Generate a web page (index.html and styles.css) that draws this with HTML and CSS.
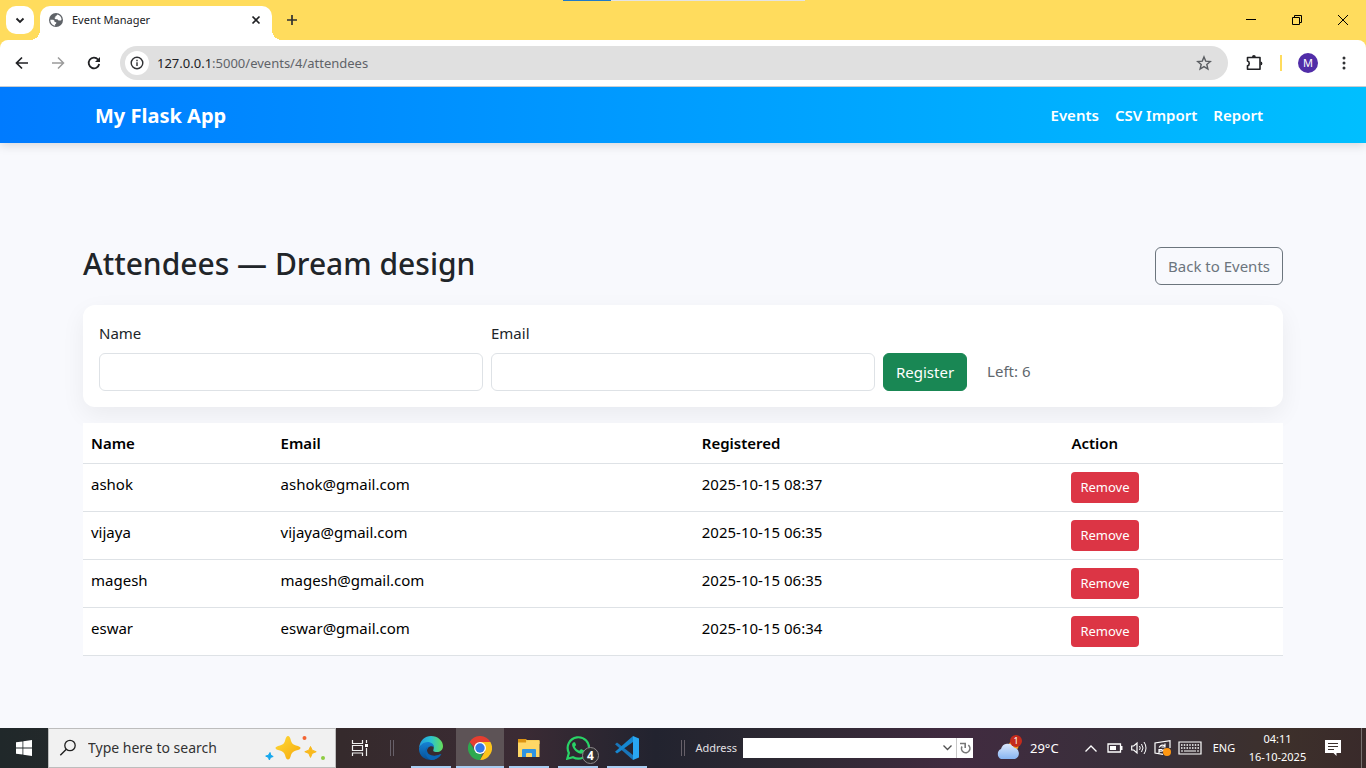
FILE: index.html
```html
<!DOCTYPE html>
<html lang="en">
<head>
<meta charset="utf-8">
<title>Event Manager</title>
<link rel="stylesheet" href="styles.css">
</head>
<body>
<header class="browser">
  <div class="load-bar"></div>
  <div class="tabstrip">
    <button class="tab-search" aria-label="Search tabs"><svg width="12" height="12" viewBox="0 0 12 12"><path d="M2.500 4.500 6 8l3.500-3.500" fill="none" stroke="#202124" stroke-width="1.800"/></svg></button>
    <div class="tab">
      <svg width="14" height="14" viewBox="0 0 14 14"><circle cx="7" cy="7" r="7" fill="#5f6368"/><path d="M1.300 6.800h2.900l1.300 1v1.300l1.700.2c.3 1-.2 1.800-1.100 2v1.400C3.300 12.300 1.300 9.800 1.300 6.800zM8.300 1.500c-.2 1-1 1.500-1.800 1.400v1.300l-1 .6c.2 1.400 1.200 1.600 3 1.500.4 1.500 2.600 1.500 4 .7C12.800 4.300 11 2.100 8.300 1.500z" fill="#fff"/></svg>
      <span class="tab-title">Event Manager</span>
      <button class="tab-close" aria-label="Close tab"><svg width="10" height="10" viewBox="0 0 10 10"><path d="m1.500 1.500 7 7m0-7-7 7" stroke="#202124" stroke-width="1.700"/></svg></button>
    </div>
    <button class="tab-new" aria-label="New tab"><svg width="12" height="12" viewBox="0 0 12 12"><path d="M6 1v10M1 6h10" stroke="#303030" stroke-width="1.700"/></svg></button>
    <div class="window-controls">
      <button aria-label="Minimize"><svg width="10" height="10" viewBox="0 0 10 10"><path d="M0 4.500h10" stroke="#000"/></svg></button>
      <button aria-label="Restore"><svg width="10" height="10" viewBox="0 0 10 10"><path d="M.5 2.500h7v7h-7zM2.500 2.500v-2h7v7h-2" fill="none" stroke="#000"/></svg></button>
      <button aria-label="Close"><svg width="10" height="10" viewBox="0 0 10 10"><path d="m0 0 10 10M10 0 0 10" stroke="#000"/></svg></button>
    </div>
  </div>
  <div class="toolbar">
    <button class="tool" aria-label="Back"><svg width="14" height="14" viewBox="0 0 14 14"><path d="M13 7H2M7 1.500 1.500 7 7 12.500" fill="none" stroke="#202124" stroke-width="1.700"/></svg></button>
    <button class="tool" aria-label="Forward"><svg width="14" height="14" viewBox="0 0 14 14"><path d="M1 7h11M7 1.500 12.500 7 7 12.500" fill="none" stroke="#9b9b9b" stroke-width="1.500"/></svg></button>
    <button class="tool" aria-label="Reload"><svg width="14" height="14" viewBox="0 0 14 14"><path d="M12.200 8A5.300 5.300 0 1 1 11 3.500l1 1.300" fill="none" stroke="#202124" stroke-width="1.800"/><path d="M13 1v5H8z" fill="#202124"/></svg></button>
    <div class="omnibox">
      <button class="site-info" aria-label="Site information"><svg width="14" height="14" viewBox="0 0 14 14"><circle cx="7" cy="7" r="5.800" fill="none" stroke="#303134" stroke-width="1.400"/><path d="M7 6.200V10M7 3.800v1.400" stroke="#303134" stroke-width="1.400"/></svg></button>
      <div class="url" role="textbox" aria-label="Address"><span class="host">127.0.0.1</span>:5000/events/4/attendees</div>
      <button class="star" aria-label="Bookmark"><svg width="16" height="16" viewBox="0 0 16 16"><path d="m8 1.900 1.700 4.200 4.600.4-3.500 3 1.100 4.500L8 11.600 4.100 14l1.100-4.500-3.500-3 4.600-.4z" fill="none" stroke="#5a5d61" stroke-width="1.400"/></svg></button>
    </div>
    <button class="tool extensions" aria-label="Extensions"><svg width="18" height="18" viewBox="0 0 18 18"><path d="M2.500 3.500H15v11.800H2.500v-3.500c2.300-.5 2.300-4.300 0-4.800z" fill="none" stroke="#202124" stroke-width="1.600" stroke-linejoin="round"/><path d="M7 3a1.900 1.900 0 0 1 3.800 0zM15.500 7.500a1.900 1.900 0 0 1 0 3.800z" fill="#202124"/></svg></button>
    <span class="tool-divider"></span>
    <button class="avatar" aria-label="Profile">M</button>
    <button class="tool more" aria-label="Menu"><svg width="4" height="14" viewBox="0 0 4 14"><g fill="#303134"><circle cx="2" cy="2" r="1.500"/><circle cx="2" cy="7" r="1.500"/><circle cx="2" cy="12" r="1.500"/></g></svg></button>
  </div>
</header>

<div class="page">
  <nav class="navbar">
    <div class="container navbar-inner">
      <a class="brand" href="#">My Flask App</a>
      <div class="nav-links"><a href="#">Events</a><a href="#">CSV Import</a><a href="#">Report</a></div>
    </div>
  </nav>
  <main class="container content">
    <div class="heading-row">
      <h2>Attendees — Dream design</h2>
      <a class="btn btn-outline" href="#">Back to Events</a>
    </div>
    <form class="card">
      <div class="field"><label for="name">Name</label><input id="name" type="text"></div>
      <div class="field"><label for="email">Email</label><input id="email" type="email"></div>
      <button class="btn btn-success" type="button">Register</button>
      <span class="left-count">Left: 6</span>
    </form>
    <table class="attendees">
      <thead><tr><th class="col-name">Name</th><th class="col-email">Email</th><th class="col-date">Registered</th><th>Action</th></tr></thead>
      <tbody>
        <tr><td>ashok</td><td>ashok@gmail.com</td><td>2025-10-15 08:37</td><td><button class="btn-remove">Remove</button></td></tr>
        <tr><td>vijaya</td><td>vijaya@gmail.com</td><td>2025-10-15 06:35</td><td><button class="btn-remove">Remove</button></td></tr>
        <tr><td>magesh</td><td>magesh@gmail.com</td><td>2025-10-15 06:35</td><td><button class="btn-remove">Remove</button></td></tr>
        <tr><td>eswar</td><td>eswar@gmail.com</td><td>2025-10-15 06:34</td><td><button class="btn-remove">Remove</button></td></tr>
      </tbody>
    </table>
  </main>
</div>

<footer class="taskbar">
  <button class="start" aria-label="Start"><svg width="16" height="16" viewBox="0 0 16 16"><path d="M0 2.300 6.500 1.400v6.200H0zM7.300 1.300 16 0v7.600H7.300zM0 8.400h6.500v6.200L0 13.700zM7.300 8.400H16V16l-8.700-1.300z" fill="#fff"/></svg></button>
  <div class="search">
    <svg width="18" height="18" viewBox="0 0 18 18"><circle cx="11" cy="6.500" r="5.200" fill="none" stroke="#202020" stroke-width="1.300"/><path d="m7.300 10.300-6 6" stroke="#202020" stroke-width="1.400"/></svg>
    <input type="text" placeholder="Type here to search" aria-label="Type here to search">
    <svg width="62" height="28" viewBox="0 0 62 28"><defs><linearGradient id="gold" x2="1" y2="1"><stop stop-color="#ffdb3a"/><stop offset="1" stop-color="#f5a90c"/></linearGradient></defs><path d="M24 2q2 0 3 5 1 3.500 5 4.500 4.500 1 4.500 2.500t-4.500 2.500q-4 1-5 4.500-1 4.500-3 4.500t-3-4.500q-1-3.500-5-4.500-4.500-1-4.500-2.500t4.500-2.500q4-1 5-4.500 1-5 3-5z" fill="url(#gold)"/><path d="m46.500 12.500 1.700 3.700 4 1.500-4 1.700-1.700 4-1.700-4-4-1.700 4-1.500z" fill="#f9b91c" stroke="#f9b91c" stroke-linejoin="round"/><circle cx="40.500" cy="4" r="2" fill="#f36432"/><circle cx="59" cy="24" r="2" fill="#8ecc42"/><path d="m6 18.500.8 2.800 2.400 1.200-2.700.9-1.100 2.600-1-2.600-2.700-1.300 2.700-.8z" fill="#16a8ee" stroke="#16a8ee" stroke-linejoin="round"/></svg>
  </div>
  <button class="task-view" aria-label="Task view"><svg width="18" height="16" viewBox="0 0 18 16"><path d="M1.500 0v3.500h10V0M1.500 16v-3h10v3M1.500 5.500h10v5h-10zM15.500 0v3M15.500 8v8" fill="none" stroke="#eee" stroke-width="1.200"/><path d="M14 4h3v3h-3z" fill="#fff"/></svg></button>
  <span class="grip"></span>
  <div class="apps">
    <button class="app" aria-label="Edge"><svg width="24" height="24" viewBox="0 0 24 24"><defs><linearGradient id="edge-top"><stop stop-color="#239be0"/><stop offset=".5" stop-color="#2bc3d0"/><stop offset="1" stop-color="#66dd57"/></linearGradient><linearGradient id="edge-low" x2="0" y2="1"><stop stop-color="#1682d4"/><stop offset="1" stop-color="#075095"/></linearGradient></defs><path d="M0 12C1 4 6 0 12 0c7 0 12 5 12 10 0 4-3 6-6 6-4 0-4-1.500-3.500-2.500C16 9 12 7 8.500 7 4.500 7 1.500 9 0 12z" fill="url(#edge-top)"/><path d="M0 12c2-4 5-6 8.500-6 4 0 6.500 2.500 6.500 5-4-2-7 1-7 4 0 4 4 6 8 5 3-.5 5-2 6-2-2 4-6 6-10 6C5 24-.5 19 0 12z" fill="url(#edge-low)"/><path d="M8.500 11C5 13 5 21 12 24c4 0 8-2 10.500-6C16 21 8 20 8 14z" fill="#0a65b5"/></svg></button>
    <button class="app active" aria-label="Chrome"><svg width="24" height="24" viewBox="0 0 24 24"><path d="M1.600 6A12 12 0 0 1 22.400 6H12v12z" fill="#e43e30"/><path d="M22.400 6A12 12 0 0 1 12 24l5.200-9L12 6z" fill="#fcc41b"/><path d="M12 24A12 12 0 0 1 1.600 6l5.200 9L14 18z" fill="#2da94f"/><circle cx="12" cy="12" r="6" fill="#fff"/><circle cx="12" cy="12" r="4.700" fill="#3478e8"/></svg></button>
    <button class="app" aria-label="File Explorer"><svg width="24" height="24" viewBox="0 0 24 24"><path d="M1 3h8l2 2h11v4H1z" fill="#dc9412"/><path d="M9 4h13.500v4H9z" fill="#f8cf58"/><path d="M1 6.500h8L11 5h11.500v16H1z" fill="#ffd766"/><path d="M5 21v-7q0-1 1-1h12q1 0 1 1v7h-4v-3q0-1-1-1h-4q-1 0-1 1v3z" fill="#3094e2"/></svg></button>
    <button class="app" aria-label="WhatsApp"><svg width="24" height="24" viewBox="0 0 24 24"><path d="m1.300 22.700 1.600-5.800A10.700 10.700 0 1 1 7 21.200z" fill="none" stroke="#29d366" stroke-width="2.200"/><path d="M8 6.200c-1 0-2 1.300-1.900 2.800.4 4.500 6.500 9.500 10 8.600 2-.6 2.300-2 2-3L15 13l-1.700 1.800c-2-.8-3.500-2.300-4.500-4.100l1.300-1.600L9 6.300z" fill="#29d366"/></svg><span class="badge">4</span></button>
    <button class="app" aria-label="Visual Studio Code"><svg width="24" height="24" viewBox="0 0 24 24"><path d="m0 8.300 2-1.700L18 19v5L0 8.300z" fill="#1976ba"/><path d="m0 15.700 2 1.700L18 6V0L0 15.700z" fill="#1687d0"/><path d="M18 0 24 2.500v19L18 24z" fill="#29a7f2"/></svg></button>
  </div>
  <span class="fill"></span>
  <span class="grip"></span>
  <label class="address-label" for="address">Address</label>
  <div class="address"><input id="address" type="text"><button aria-label="Show addresses"><svg width="9" height="6" viewBox="0 0 9 6"><path d="m.5.500 4 4 4-4" fill="none" stroke="#505050" stroke-width="1.300"/></svg></button><button class="go" aria-label="Refresh"><svg width="11" height="12" viewBox="0 0 11 12"><path d="M8.300 3.200A4.200 4.200 0 1 1 2 4.500" fill="none" stroke="#777" stroke-width="1.600"/><path d="M0 1.500h5.200V6" fill="none" stroke="#777" stroke-width="1.600"/></svg></button></div>
  <button class="weather"><svg width="28" height="26" viewBox="0 0 28 26"><defs><linearGradient id="cloud" x2="0" y2="1"><stop stop-color="#dce9fc"/><stop offset="1" stop-color="#87b4f2"/></linearGradient></defs><circle cx="18.500" cy="11" r="5" fill="#f59a22"/><path d="M6 24a5.500 5.500 0 0 1 0-10 7 7 0 0 1 13-1.500A6 6 0 0 1 20 24z" fill="url(#cloud)"/></svg><span class="alert">1</span><span>29°C</span></button>
  <div class="tray">
    <button aria-label="Show hidden icons"><svg width="12" height="7" viewBox="0 0 12 7"><path d="m.5 6.500 5.500-5.500 5.500 5.500" fill="none" stroke="#fff" stroke-width="1.300"/></svg></button>
    <button aria-label="Battery"><svg width="16" height="10" viewBox="0 0 16 10"><path d="M1 1h12.500v8H1z" fill="none" stroke="#fff" stroke-width="1.300"/><path d="M3 3h6v4H3zM14 3h1.500v4H14z" fill="#fff"/></svg></button>
    <button aria-label="Volume"><svg width="17" height="14" viewBox="0 0 17 14"><path d="M.7 5h2L6 2v10L2.700 9h-2z" fill="none" stroke="#fff" stroke-width="1.200"/><path d="M8.500 5q1.500 2 0 4M10.500 3q3 4 0 8M13 1q4 6 0 12" fill="none" stroke="#fff"/></svg></button>
    <button aria-label="Updates"><svg width="18" height="16" viewBox="0 0 18 16"><path d="M16 8V.7L1 3v10l8 1.400" fill="none" stroke="#fff" stroke-width="1.200"/><path d="M5 7.500q3-4 6-1.500M11 3.500V7H7.500M11 9q-3 3.500-6 1.500M5 13V9.500h3.500" fill="none" stroke="#fff" stroke-width="1.200"/><circle cx="13" cy="12" r="4" fill="#ff9712"/></svg></button>
    <button aria-label="Touch keyboard"><svg width="24" height="14" viewBox="0 0 24 14"><path d="M1 1h22v12H1z" fill="none" stroke="#fff" stroke-width="1.200"/><path d="M3 4h18M3 7h18" stroke="#fff" stroke-width="1.300" stroke-dasharray="1.500 1.250"/><path d="M3 10h2M6 10h12M19 10h2" stroke="#fff" stroke-width="1.200"/></svg></button>
  </div>
  <button class="lang">ENG</button>
  <button class="clock"><span>04:11</span><span>16-10-2025</span></button>
  <button class="notify" aria-label="Notifications"><svg width="16" height="16" viewBox="0 0 16 16"><path d="M0 0h16v13h-4.500v3L8.500 13H0z" fill="#fff"/><path d="M3 3.500h10M3 6.500h10M3 9.500h6" stroke="#3b302c" stroke-width="1.200"/></svg></button>
  <button class="desktop" aria-label="Show desktop"></button>
</footer>
</body>
</html>
```

FILE: styles.css
```css
* { box-sizing: border-box; }
body {
  margin: 0;
  min-height: 100vh;
  display: flex;
  flex-direction: column;
  font-family: "Segoe UI", "Noto Sans", "Open Sans", sans-serif;
  font-size: 15px;
  line-height: 24px;
  color: #212529;
  background: #f8f9fd;
}
button, input { font: inherit; color: inherit; border: 0; padding: 0; background: none; }
button { display: inline-flex; align-items: center; justify-content: center; }
a { text-decoration: none; }
svg { display: block; flex: none; }

/* Browser frame */
.browser { position: relative; background: #ffdc5d; }
.load-bar {
  position: absolute;
  top: 0;
  left: 41.2%;
  width: 17.7%;
  height: 1px;
  background: linear-gradient(90deg, #1f7ac8 20%, #e3e3e3 20%);
}
.tabstrip { display: flex; height: 40px; padding-left: 6px; }
.tab-search { width: 28px; height: 28px; margin-top: 6px; border-radius: 10px; background: #fff; }
.tab {
  position: relative;
  display: flex;
  align-items: center;
  gap: 9px;
  width: 232px;
  height: 34px;
  margin: 6px 0 0 6px;
  padding: 0 10px 6px 9px;
  border-radius: 10px 10px 0 0;
  background: #fff;
}
.tab::before, .tab::after { content: ""; position: absolute; bottom: 0; width: 10px; height: 10px; }
.tab::before { right: 100%; background: radial-gradient(circle at 0 0, transparent 10px, #fff 10px); }
.tab::after { left: 100%; background: radial-gradient(circle at 100% 0, transparent 10px, #fff 10px); }
.tab-title { flex: 1; font-size: 11px; line-height: 16px; color: #202124; }
.tab-close { width: 12px; height: 16px; }
.tab-new { width: 28px; height: 28px; margin: 6px 0 0 6px; }
.window-controls { display: flex; margin-left: auto; }
.window-controls button { width: 46px; height: 40px; }
.toolbar {
  display: flex;
  align-items: center;
  height: 47px;
  padding: 0 4px;
  border-bottom: 1px solid #c8cdd2;
  border-radius: 8px 8px 0 0;
  background: #fff;
}
.tool { width: 36px; height: 34px; }
.omnibox {
  flex: 1;
  display: flex;
  align-items: center;
  height: 34px;
  margin-left: 8px;
  padding: 0 16px 0 5px;
  border-radius: 17px;
  background: #e0e0e0;
}
.site-info { width: 24px; height: 24px; border-radius: 50%; background: #fff; }
.url { flex: 1; margin-left: 8px; font-size: 13px; line-height: 20px; color: #5f6368; }
.host { color: #202124; }
.extensions { margin-left: 8px; }
.tool-divider { width: 2px; height: 16px; margin: 0 16px 0 8px; background: #ffdc5d; }
.avatar { width: 20px; height: 20px; border-radius: 50%; background: #512da8; color: #fff; font-size: 11px; line-height: 20px; }
.more { margin-left: 8px; }

/* Page */
.page { flex: 1; }
.container { width: calc(100% - 32px); max-width: 1200px; margin: 0 auto; }
.navbar { background: linear-gradient(90deg, #007bff, #00bfff); box-shadow: 0 2px 10px rgba(0, 0, 0, .15); }
.navbar-inner { display: flex; align-items: center; justify-content: space-between; min-height: 56px; padding: 0 12px; }
.navbar a { color: #fff; font-weight: 600; }
.navbar .brand { padding-top: 2px; font-size: 20px; font-weight: 700; }
.nav-links { display: flex; gap: 16px; padding: 0 8px; }
.content { padding: 100px 0 16px; }
.heading-row { display: flex; align-items: center; justify-content: space-between; margin-bottom: 16px; }
h2 { margin: 0 0 4px; font-size: 30px; line-height: 42px; font-weight: 500; }
.btn { display: inline-flex; align-items: center; justify-content: center; height: 38px; padding: 0 12px; border: 1px solid; border-radius: 6px; }
.btn-outline { border-color: #6c757d; color: #6c757d; }
.btn-success { border-color: #198754; background: #198754; color: #fff; }
.card {
  display: flex;
  align-items: flex-end;
  gap: 8px;
  margin-bottom: 16px;
  padding: 16px;
  border-radius: 12px;
  background: #fff;
  box-shadow: 0 8px 24px rgba(0, 0, 0, .06);
}
.field { display: flex; flex-direction: column; gap: 8px; width: calc((100% - 16px) / 3); }
.field input { width: 100%; height: 38px; padding: 0 12px; border: 1px solid #dee2e6; border-radius: 6px; background: #fff; }
.left-count { margin: 0 0 8px 12px; color: #61676d; }
.attendees { position: relative; width: 100%; table-layout: fixed; border-collapse: separate; border-spacing: 0; background: #fff; color: #000; }
.attendees th, .attendees td { padding: 8px; border-bottom: 1px solid #dee2e6; text-align: left; vertical-align: top; }
.attendees th { font-weight: 600; }
.col-name { width: 15.8%; }
.col-email { width: 35.1%; }
.col-date { width: 30.8%; }
.btn-remove { display: flex; height: 31px; padding: 0 9px; border-radius: 4px; background: #dc3545; color: #fff; font-size: 13px; line-height: 21px; }

/* Taskbar */
.taskbar {
  display: flex;
  align-items: center;
  height: 40px;
  color: #fff;
  font-size: 11px;
  background: linear-gradient(90deg, #20282a 0, #352a2c 25%, #3b2b34 38%, #22232f 48%, #2d2932 58%, #412b40 70%, #38303a 84%, #3d302b 94%, #392a2a 100%);
}
.start { width: 48px; height: 40px; }
.search {
  display: flex;
  align-items: center;
  width: 288px;
  height: 40px;
  padding: 0 9px 0 10px;
  border: 1px solid #bdbdbd;
  background: #f1f1f1;
}
.search input { flex: 1; min-width: 0; margin-left: 11px; font-size: 14px; line-height: 20px; color: #333; }
.search input::placeholder { color: #333; opacity: 1; }
.task-view { width: 48px; height: 40px; }
.grip { width: 4px; height: 16px; margin: 0 6px; border: 1px solid #676069; border-width: 0 1px; }
.apps { display: flex; gap: 1px; padding-left: 7px; }
.app { position: relative; width: 48px; height: 40px; }
.app::after { content: ""; position: absolute; bottom: 0; left: 4px; right: 4px; height: 2px; background: #a8cdf2; }
.app.active { background: #5d5356; }
.app.active::after { left: 0; right: 0; }
.badge {
  position: absolute;
  right: 3px;
  bottom: 4px;
  width: 17px;
  height: 17px;
  border: 1px solid #8d898c;
  border-radius: 50%;
  background: #302e31;
  font-size: 12px;
  line-height: 15px;
  font-weight: 700;
}
.fill { flex: 1; }
.address-label { margin: 0 6px 0 4px; line-height: 16px; color: #e3e0e4; }
.address { display: flex; width: 230px; height: 20px; background: #fff; color: #000; }
.address input { flex: 1; min-width: 0; padding-left: 4px; }
.address button { width: 18px; }
.address .go { border-left: 1px solid #c8c8c8; width: 17px; }
.weather { position: relative; width: 84px; height: 40px; margin-left: 22px; justify-content: flex-start; gap: 7px; font-size: 13px; }
.alert { position: absolute; left: 15px; top: 7px; width: 12px; height: 12px; border-radius: 50%; background: #c42b1c; font-size: 9px; line-height: 12px; }
.tray { display: flex; }
.tray button { width: 24px; height: 40px; }
.tray button:last-child { width: 30px; }
.lang { width: 38px; }
.clock { flex-direction: column; width: 69px; height: 40px; line-height: 18px; }
.notify { width: 42px; height: 40px; }
.desktop { width: 5px; height: 40px; margin-left: 7px; border-left: 1px solid #77706f; }
```
